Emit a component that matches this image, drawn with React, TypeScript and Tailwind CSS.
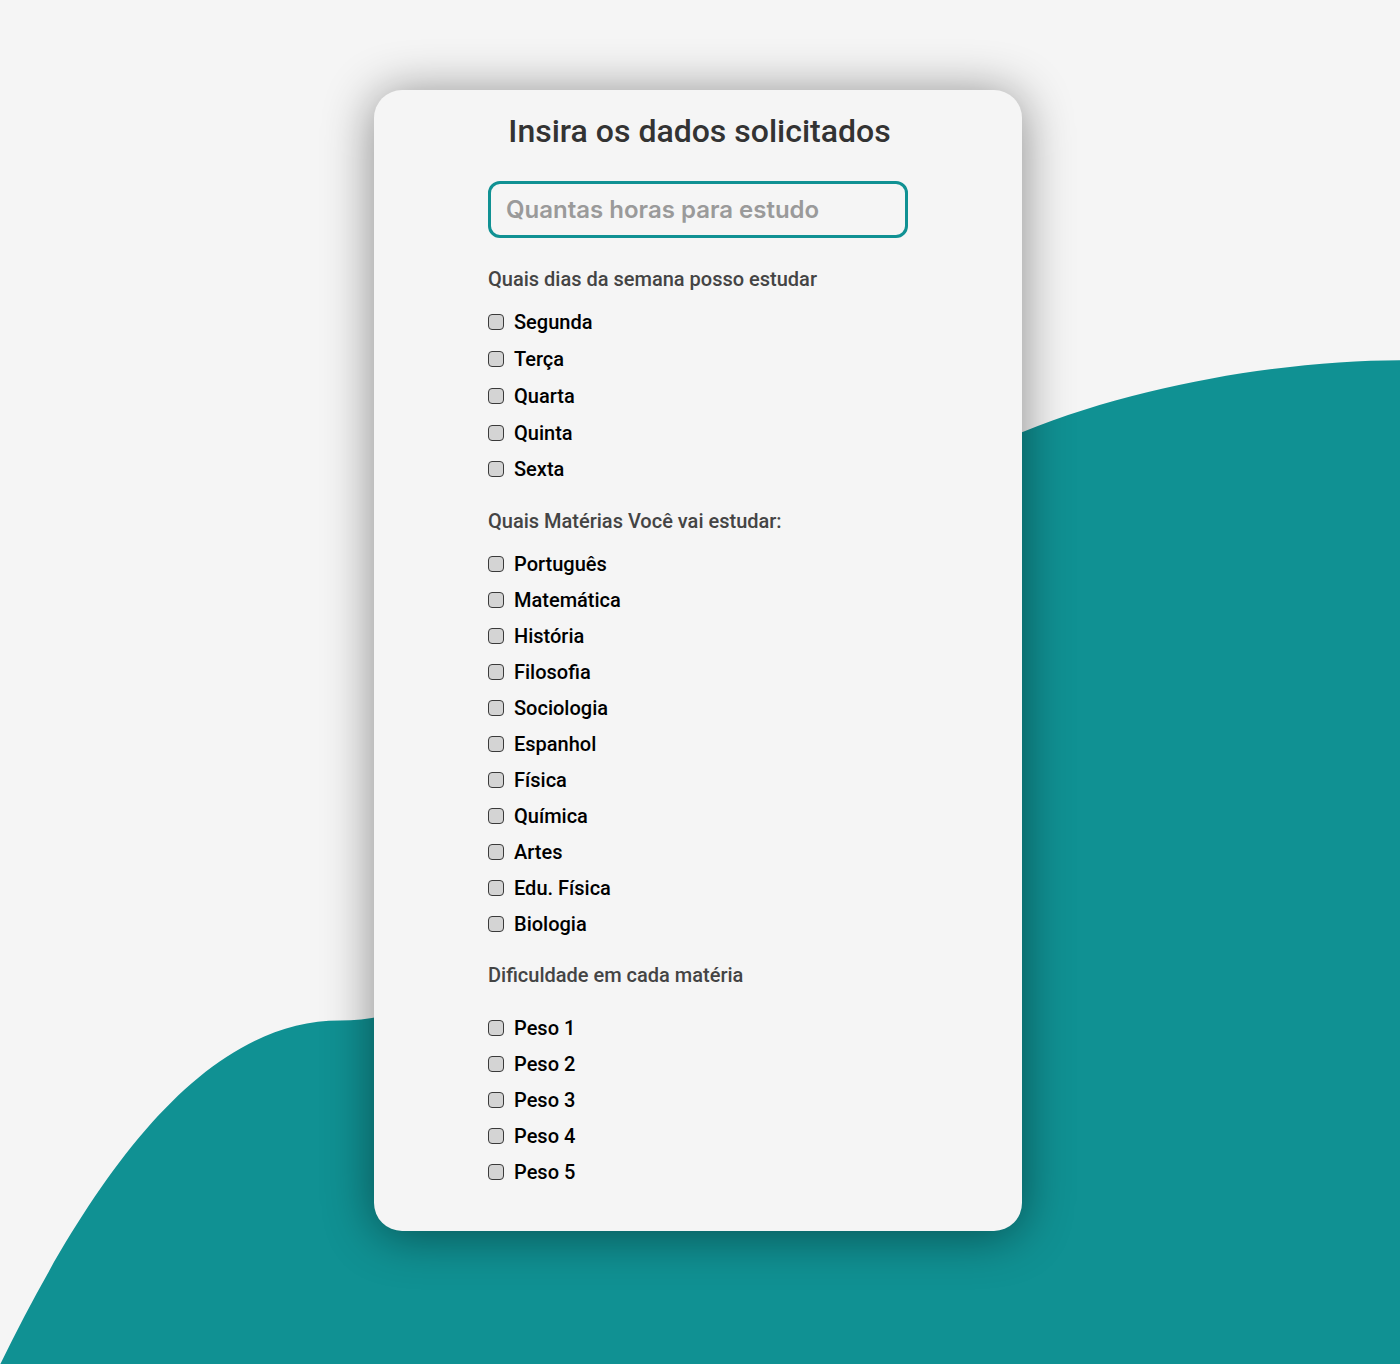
import React, { useState } from 'react';

const dias = ['Segunda', 'Terça', 'Quarta', 'Quinta', 'Sexta'];
const materias = [
  'Português',
  'Matemática',
  'História',
  'Filosofia',
  'Sociologia',
  'Espanhol',
  'Física',
  'Química',
  'Artes',
  'Edu. Física',
  'Biologia',
];
const pesos = ['Peso 1', 'Peso 2', 'Peso 3', 'Peso 4', 'Peso 5'];

const Opcao: React.FC<{ label: string; tall?: boolean }> = ({ label, tall }) => {
  const [checked, setChecked] = useState(false);
  return (
    <label className={`flex items-center gap-[10px] cursor-pointer ${tall ? 'h-[36.75px]' : 'h-[36px]'}`}>
      <input
        type="checkbox"
        checked={checked}
        onChange={() => setChecked(!checked)}
        className="appearance-none w-4 h-4 rounded-[4px] border border-[#3a3a3a] bg-[#d4d4d4] checked:bg-[#109193] cursor-pointer"
      />
      <span className="text-[20px] font-medium text-black leading-none">{label}</span>
    </label>
  );
};

const App: React.FC = () => {
  const [horas, setHoras] = useState('');

  return (
    <div className="relative min-h-[1364px] bg-[#f5f5f5] overflow-hidden font-['Roboto',sans-serif]">
      {/* onda de fundo */}
      <svg
        className="absolute inset-0 w-full h-full"
        viewBox="0 0 1400 1364"
        preserveAspectRatio="none"
      >
        <path
          d="M0,1364 C90,1180 200,1020 340,1020 C600,1020 900,482 1022,432 C1150,380 1300,360 1400,360 L1400,1364 Z"
          fill="#109193"
        />
      </svg>

      <div className="relative pt-[90px] pb-[134px] pr-1">
        <div className="mx-auto w-[648px] rounded-[28px] bg-[#f5f5f5] shadow-[0_4px_50px_rgba(0,0,0,0.45)] pt-[21px] pb-[41px]">
          <h1 className="text-center pl-[3px] text-[32px] leading-[40px] font-medium text-[#333]">
            Insira os dados solicitados
          </h1>

          <div className="mx-auto w-[420px]">
            <input
              type="text"
              value={horas}
              onChange={(e) => setHoras(e.target.value)}
              placeholder="Quantas horas para estudo"
              className="mt-[30px] w-full h-[57px] rounded-[12px] border-[3px] border-[#109193] bg-transparent px-[15px] text-[24px] font-semibold font-['Inter',sans-serif] text-[#333] placeholder:text-[#9a9a9a] outline-none"
            />

            <p className="mt-[29px] text-[20px] leading-[24px] font-medium text-[#444]">
              Quais dias da semana posso estudar
            </p>
            <div className="mt-[13px] flex flex-col">
              {dias.map((d) => (
                <Opcao key={d} label={d} tall />
              ))}
            </div>

            <p className="mt-[21px] text-[20px] leading-[24px] font-medium text-[#444]">
              Quais Matérias Você vai estudar:
            </p>
            <div className="mt-[13px] flex flex-col">
              {materias.map((m) => (
                <Opcao key={m} label={m} />
              ))}
            </div>

            <p className="mt-[21px] text-[20px] leading-[24px] font-medium text-[#444]">
              Dificuldade em cada matéria
            </p>
            <div className="mt-[23px] flex flex-col">
              {pesos.map((p) => (
                <Opcao key={p} label={p} />
              ))}
            </div>
          </div>
        </div>
      </div>
    </div>
  );
};

export default App;
